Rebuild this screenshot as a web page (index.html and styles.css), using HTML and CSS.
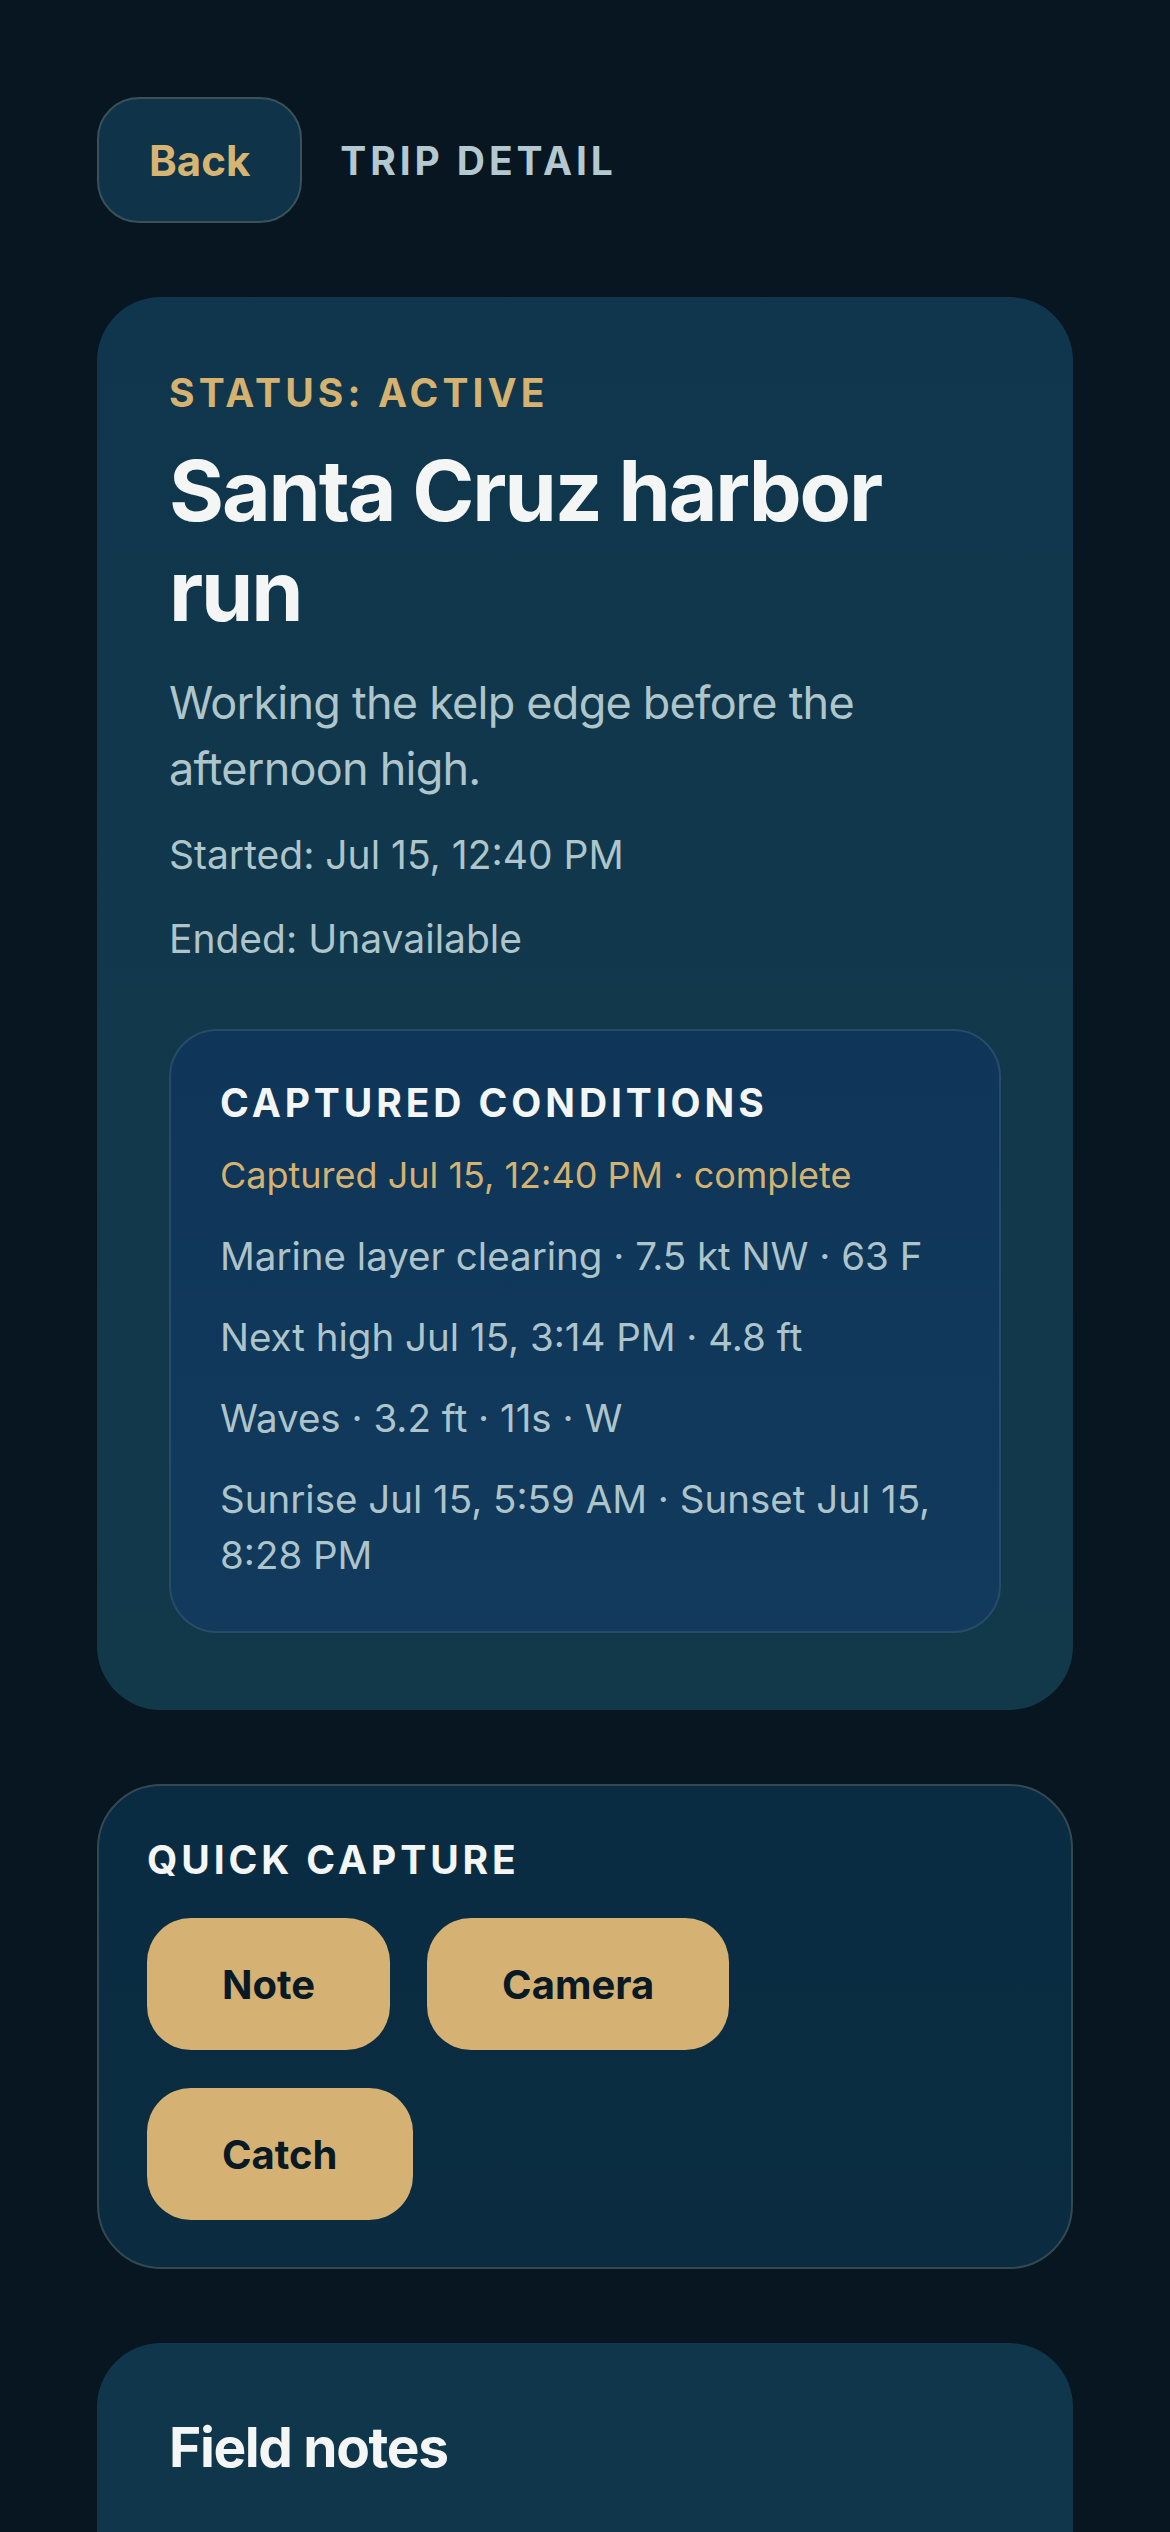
FILE: index.html
```html
<!DOCTYPE html>
<html lang="en">
<head>
    <meta charset="UTF-8">
    <meta name="viewport" content="width=device-width, initial-scale=1.0">
    <title>Trip Detail</title>
    <link rel="stylesheet" href="styles.css">
</head>
<body>
    <div class="screen">
        <div class="topbar">
            <button class="back-btn">Back</button>
            <span class="topbar-title">TRIP DETAIL</span>
        </div>

        <div class="card trip-card">
            <div class="status">STATUS: ACTIVE</div>
            <h1 class="trip-title">Santa Cruz harbor run</h1>
            <p class="trip-desc">Working the kelp edge before the afternoon high.</p>
            <p class="trip-meta">Started: Jul 15, 12:40 PM</p>
            <p class="trip-meta">Ended: Unavailable</p>

            <div class="conditions">
                <h2 class="section-label">CAPTURED CONDITIONS</h2>
                <div class="cond-list">
                    <div class="cond-row captured">Captured Jul 15, 12:40 PM · complete</div>
                    <div class="cond-row">Marine layer clearing · 7.5 kt NW · 63 F</div>
                    <div class="cond-row">Next high Jul 15, 3:14 PM · 4.8 ft</div>
                    <div class="cond-row">Waves · 3.2 ft · 11s · W</div>
                    <div class="cond-row">Sunrise Jul 15, 5:59 AM · Sunset Jul 15, 8:28 PM</div>
                </div>
            </div>
        </div>

        <div class="card capture-card">
            <h2 class="section-label">QUICK CAPTURE</h2>
            <div class="capture-actions">
                <button class="capture-btn">Note</button>
                <button class="capture-btn">Camera</button>
                <button class="capture-btn">Catch</button>
            </div>
        </div>

        <div class="card notes-card">
            <h2 class="notes-title">Field notes</h2>
        </div>
    </div>
</body>
</html>
```

FILE: styles.css
```css
body {
    font-family: 'Inter', 'Noto Sans', sans-serif;
    margin: 0;
    background-color: #071621;
    color: #f2f5f3;
}

.screen {
    padding: 97px 97px 0;
    display: flex;
    flex-direction: column;
    gap: 74px;
}

h1, h2, p {
    margin: 0;
}

button {
    font-family: inherit;
    cursor: pointer;
}

/* top bar */
.topbar {
    display: flex;
    align-items: center;
    gap: 38px;
}

.back-btn {
    height: 126px;
    padding: 0 50px;
    font-size: 42px;
    font-weight: 700;
    color: #d6b472;
    background: #0f3349;
    border: 2px solid #3c5157;
    border-radius: 42px;
}

.topbar-title {
    font-size: 39px;
    font-weight: 700;
    letter-spacing: 0.1em;
    color: #b3c8cf;
}

/* cards */
.card {
    border-radius: 64px;
}

.trip-card {
    padding: 72px 72px 77px;
    background: linear-gradient(180deg, #10364d, #12394a);
}

.status {
    font-size: 39px;
    line-height: 48px;
    font-weight: 700;
    letter-spacing: 0.105em;
    color: #d5b270;
}

.trip-title {
    margin-top: 24px;
    font-size: 84px;
    line-height: 100px;
    font-weight: 700;
    letter-spacing: -0.025em;
    color: #f3f6f4;
}

.trip-desc {
    margin-top: 29px;
    font-size: 45px;
    line-height: 66px;
    letter-spacing: -0.017em;
    color: #aec5ca;
}

.trip-meta {
    margin-top: 23px;
    font-size: 39px;
    line-height: 60px;
    color: #aec5ca;
}

.trip-meta + .trip-meta {
    margin-top: 24px;
}

.conditions {
    margin-top: 60px;
    padding: 48px 48px 48px 49px;
    border: 2px solid #284c68;
    border-radius: 48px;
    background: linear-gradient(180deg, #0f3658, #113a5c);
}

.section-label {
    font-size: 39px;
    line-height: 48px;
    font-weight: 700;
    letter-spacing: 0.1em;
    color: #f3f6f4;
}

.cond-list {
    margin-top: 20px;
    display: flex;
    flex-direction: column;
    gap: 25px;
}

.cond-row {
    font-size: 38.5px;
    line-height: 56px;
    color: #adc4ca;
}

.cond-row.captured {
    font-size: 36px;
    color: #d5b270;
}

/* quick capture */
.capture-card {
    padding: 50px 48px 47px;
    border: 2px solid #34494f;
    background: linear-gradient(180deg, #0a2c43, #0b2c40);
}

.capture-actions {
    margin-top: 34px;
    max-width: 860px;
    display: flex;
    flex-wrap: wrap;
    gap: 38px 37px;
}

.capture-btn {
    height: 132px;
    padding: 0 75px;
    font-size: 40px;
    font-weight: 700;
    color: #0a1a25;
    background: #d5b273;
    border: none;
    border-radius: 44px;
}

/* notes */
.notes-card {
    padding: 72px;
    min-height: 400px;
    background: #10364b;
}

.notes-title {
    font-size: 55px;
    line-height: 64px;
    font-weight: 700;
    letter-spacing: -0.025em;
    color: #f3f6f4;
}
```
